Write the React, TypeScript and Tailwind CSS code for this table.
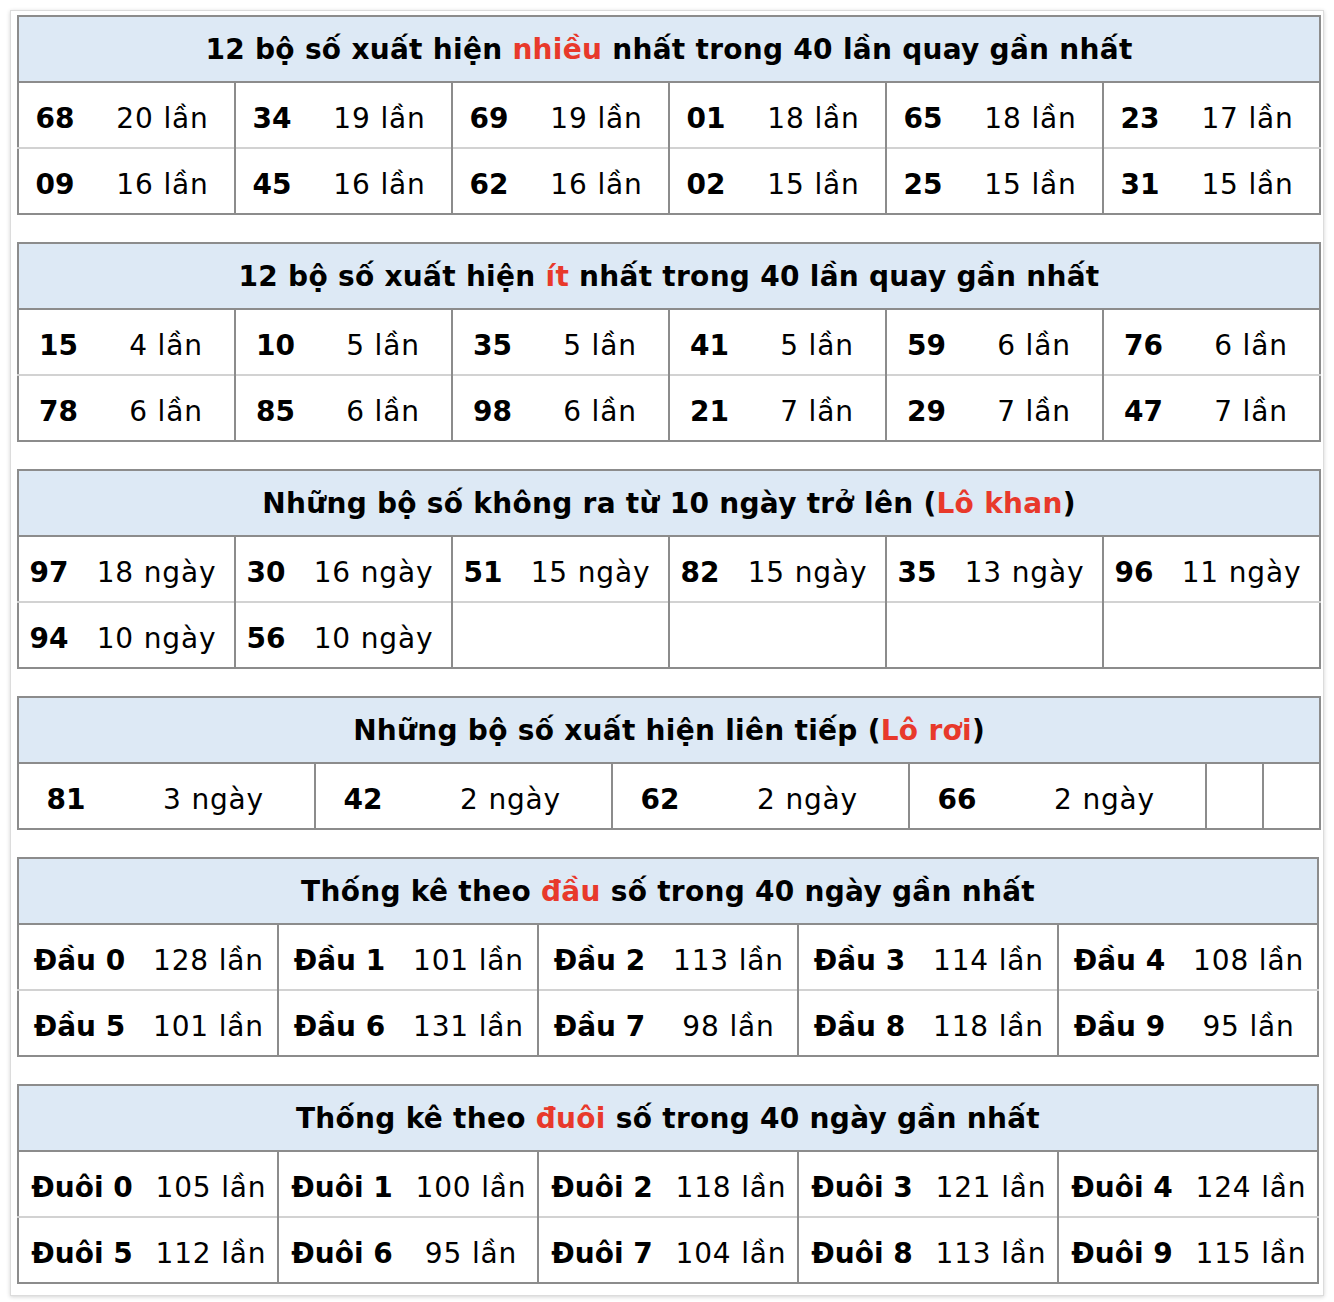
import React from "react";

type Cell = [string, string];

interface StatTable {
    before: string;
    red: string;
    after: string;
    cols: number[];
    groups: number;
    extra?: number;
    rows: (Cell | null)[][];
}

const tables: StatTable[] = [
    {
        before: "12 bộ số xuất hiện ",
        red: "nhiều",
        after: " nhất trong 40 lần quay gần nhất",
        cols: [73, 144],
        groups: 6,
        rows: [
            [["68", "20 lần"], ["34", "19 lần"], ["69", "19 lần"], ["01", "18 lần"], ["65", "18 lần"], ["23", "17 lần"]],
            [["09", "16 lần"], ["45", "16 lần"], ["62", "16 lần"], ["02", "15 lần"], ["25", "15 lần"], ["31", "15 lần"]],
        ],
    },
    {
        before: "12 bộ số xuất hiện ",
        red: "ít",
        after: " nhất trong 40 lần quay gần nhất",
        cols: [80, 137],
        groups: 6,
        rows: [
            [["15", "4 lần"], ["10", "5 lần"], ["35", "5 lần"], ["41", "5 lần"], ["59", "6 lần"], ["76", "6 lần"]],
            [["78", "6 lần"], ["85", "6 lần"], ["98", "6 lần"], ["21", "7 lần"], ["29", "7 lần"], ["47", "7 lần"]],
        ],
    },
    {
        before: "Những bộ số không ra từ 10 ngày trở lên (",
        red: "Lô khan",
        after: ")",
        cols: [61, 156],
        groups: 6,
        rows: [
            [["97", "18 ngày"], ["30", "16 ngày"], ["51", "15 ngày"], ["82", "15 ngày"], ["35", "13 ngày"], ["96", "11 ngày"]],
            [["94", "10 ngày"], ["56", "10 ngày"], null, null, null, null],
        ],
    },
    {
        before: "Những bộ số xuất hiện liên tiếp (",
        red: "Lô rơi",
        after: ")",
        cols: [95, 202],
        groups: 4,
        extra: 2,
        rows: [[["81", "3 ngày"], ["42", "2 ngày"], ["62", "2 ngày"], ["66", "2 ngày"]]],
    },
    {
        before: "Thống kê theo ",
        red: "đầu",
        after: " số trong 40 ngày gần nhất",
        cols: [122, 138],
        groups: 5,
        rows: [
            [["Đầu 0", "128 lần"], ["Đầu 1", "101 lần"], ["Đầu 2", "113 lần"], ["Đầu 3", "114 lần"], ["Đầu 4", "108 lần"]],
            [["Đầu 5", "101 lần"], ["Đầu 6", "131 lần"], ["Đầu 7", "98 lần"], ["Đầu 8", "118 lần"], ["Đầu 9", "95 lần"]],
        ],
    },
    {
        before: "Thống kê theo ",
        red: "đuôi",
        after: " số trong 40 ngày gần nhất",
        cols: [127, 133],
        groups: 5,
        rows: [
            [["Đuôi 0", "105 lần"], ["Đuôi 1", "100 lần"], ["Đuôi 2", "118 lần"], ["Đuôi 3", "121 lần"], ["Đuôi 4", "124 lần"]],
            [["Đuôi 5", "112 lần"], ["Đuôi 6", "95 lần"], ["Đuôi 7", "104 lần"], ["Đuôi 8", "113 lần"], ["Đuôi 9", "115 lần"]],
        ],
    },
];

const Table: React.FC<{ t: StatTable }> = ({ t }) => {
    const extra = t.extra ?? 0;
    const span = t.groups * 2 + extra;
    const colWidths: number[] = [];
    for (let i = 0; i < t.groups; i++) colWidths.push(t.cols[0], t.cols[1]);
    for (let i = 0; i < extra; i++) colWidths.push(57);

    return (
        <table className="w-full table-fixed border-collapse border-2 border-[#8c8c8c]">
            <colgroup>
                {colWidths.map((w, i) => (
                    <col key={i} style={{ width: w }} />
                ))}
            </colgroup>
            <thead>
                <tr className="h-[66px] bg-[#dde9f5] border-b-2 border-[#8c8c8c]">
                    <th colSpan={span} className="p-0 pt-[2px] text-center font-bold text-[28px] tracking-[0.01em] text-black">
                        {t.before}
                        <span className="text-[#e8392b]">{t.red}</span>
                        {t.after}
                    </th>
                </tr>
            </thead>
            <tbody>
                {t.rows.map((row, r) => (
                    <tr key={r} className={r > 0 ? "h-[66px] border-t-2 border-[#d2d2d2]" : "h-[66px]"}>
                        {row.map((cell, g) => {
                            const last = g === t.groups - 1 && extra === 0;
                            const sep = last ? "" : "border-r-2 border-r-[#8c8c8c]";
                            return (
                                <React.Fragment key={g}>
                                    <td className="p-0 pt-[7px] text-center font-bold text-[28px] whitespace-nowrap">
                                        {cell ? cell[0] : ""}
                                    </td>
                                    <td className={`p-0 pt-[7px] text-center text-[28px] tracking-[0.03em] whitespace-nowrap ${sep}`}>
                                        {cell ? cell[1] : ""}
                                    </td>
                                </React.Fragment>
                            );
                        })}
                        {Array.from({ length: extra }).map((_, i) => (
                            <td key={`e${i}`} className={i < extra - 1 ? "p-0 border-r-2 border-r-[#8c8c8c]" : "p-0"} />
                        ))}
                    </tr>
                ))}
            </tbody>
        </table>
    );
};

export default function App() {
    return (
        <div className="bg-white min-h-[1302px] pt-[10px] pl-[10px]">
            <div
                className="w-[1314px] h-[1286px] bg-white border border-[#dcdcdc] shadow-[0_1px_4px_rgba(0,0,0,0.18)] pl-[6px] pr-[5px] pt-[4px] flex flex-col gap-[27px] text-black"
                style={{ fontFamily: '"DejaVu Sans", "Liberation Sans", sans-serif' }}
            >
                {tables.map((t, i) => (
                    <Table key={i} t={t} />
                ))}
            </div>
        </div>
    );
}
